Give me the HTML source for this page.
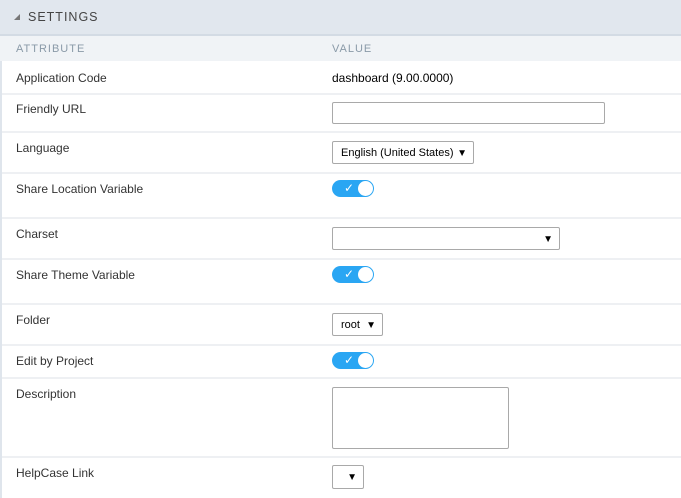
<!DOCTYPE html>
<html><head><style>
body{margin:0;width:681px;height:498px;overflow:hidden;background:#fff;font-family:"Liberation Sans",sans-serif;position:relative}
.a{position:absolute}
.hdr{left:0;top:0;width:681px;height:34px;background:#e1e7ee;border-bottom:2px solid #d3dbe4}
.col{left:0;top:36px;width:681px;height:25px;background:#f0f3f6}
.lb{left:0;top:61px;width:2px;height:437px;background:#dfe5ec}
.t{font-size:12px;color:#333;left:16px}
.ln{left:2px;width:679px;height:2px;background:#eef0f3}
.box{border:1px solid #a9a9a9;border-radius:2px;background:#fff;box-sizing:border-box}
.sel{font-size:11px;color:#000;line-height:23px;padding-left:8px}
.arr{position:absolute;right:6px;top:0;font-size:10px}
.tg{width:42px;height:17px;background:#2aa6f3;border-radius:9px}
.tg i{position:absolute;right:1px;top:1px;width:15px;height:15px;background:#fff;border-radius:50%}
.tg b{position:absolute;left:12px;top:0;color:#fff;font-size:12px;line-height:17px;font-weight:normal}
</style></head><body>
<div class="a hdr"></div>
<div class="a" style="left:14px;top:14px;width:0;height:0;border-left:6px solid transparent;border-bottom:6px solid #777"></div>
<div class="a" style="left:28px;top:10px;font-size:12.5px;letter-spacing:1px;color:#444">SETTINGS</div>
<div class="a col"></div>
<div class="a" style="left:16px;top:43px;font-size:11px;letter-spacing:1px;color:#8a9aa8">ATTRIBUTE</div>
<div class="a" style="left:332px;top:43px;font-size:11px;letter-spacing:1px;color:#8a9aa8">VALUE</div>
<div class="a lb"></div>

<div class="a t" style="top:71px">Application Code</div>
<div class="a" style="left:332px;top:71px;font-size:12px;color:#000">dashboard (9.00.0000)</div>
<div class="a ln" style="top:93px"></div>
<div class="a t" style="top:102px">Friendly URL</div>
<div class="a box" style="left:332px;top:102px;width:273px;height:22px"></div>
<div class="a ln" style="top:131px"></div>
<div class="a t" style="top:141px">Language</div>
<div class="a box sel" style="left:332px;top:141px;width:142px;height:23px">English (United States)<span class="arr">▼</span></div>
<div class="a ln" style="top:172px"></div>
<div class="a t" style="top:182px">Share Location Variable</div>
<div class="a tg" style="left:332px;top:180px"><b>✓</b><i></i></div>
<div class="a ln" style="top:217px"></div>
<div class="a t" style="top:227px">Charset</div>
<div class="a box sel" style="left:332px;top:227px;width:228px;height:23px"><span class="arr">▼</span></div>
<div class="a ln" style="top:258px"></div>
<div class="a t" style="top:268px">Share Theme Variable</div>
<div class="a tg" style="left:332px;top:266px"><b>✓</b><i></i></div>
<div class="a ln" style="top:303px"></div>
<div class="a t" style="top:313px">Folder</div>
<div class="a box sel" style="left:332px;top:313px;width:51px;height:23px">root<span class="arr">▼</span></div>
<div class="a ln" style="top:344px"></div>
<div class="a t" style="top:354px">Edit by Project</div>
<div class="a tg" style="left:332px;top:352px"><b>✓</b><i></i></div>
<div class="a ln" style="top:377px"></div>
<div class="a t" style="top:387px">Description</div>
<div class="a box" style="left:332px;top:387px;width:177px;height:62px"></div>
<div class="a ln" style="top:456px"></div>
<div class="a t" style="top:466px">HelpCase Link</div>
<div class="a box sel" style="left:332px;top:465px;width:32px;height:24px"><span class="arr">▼</span></div>
</body></html>
